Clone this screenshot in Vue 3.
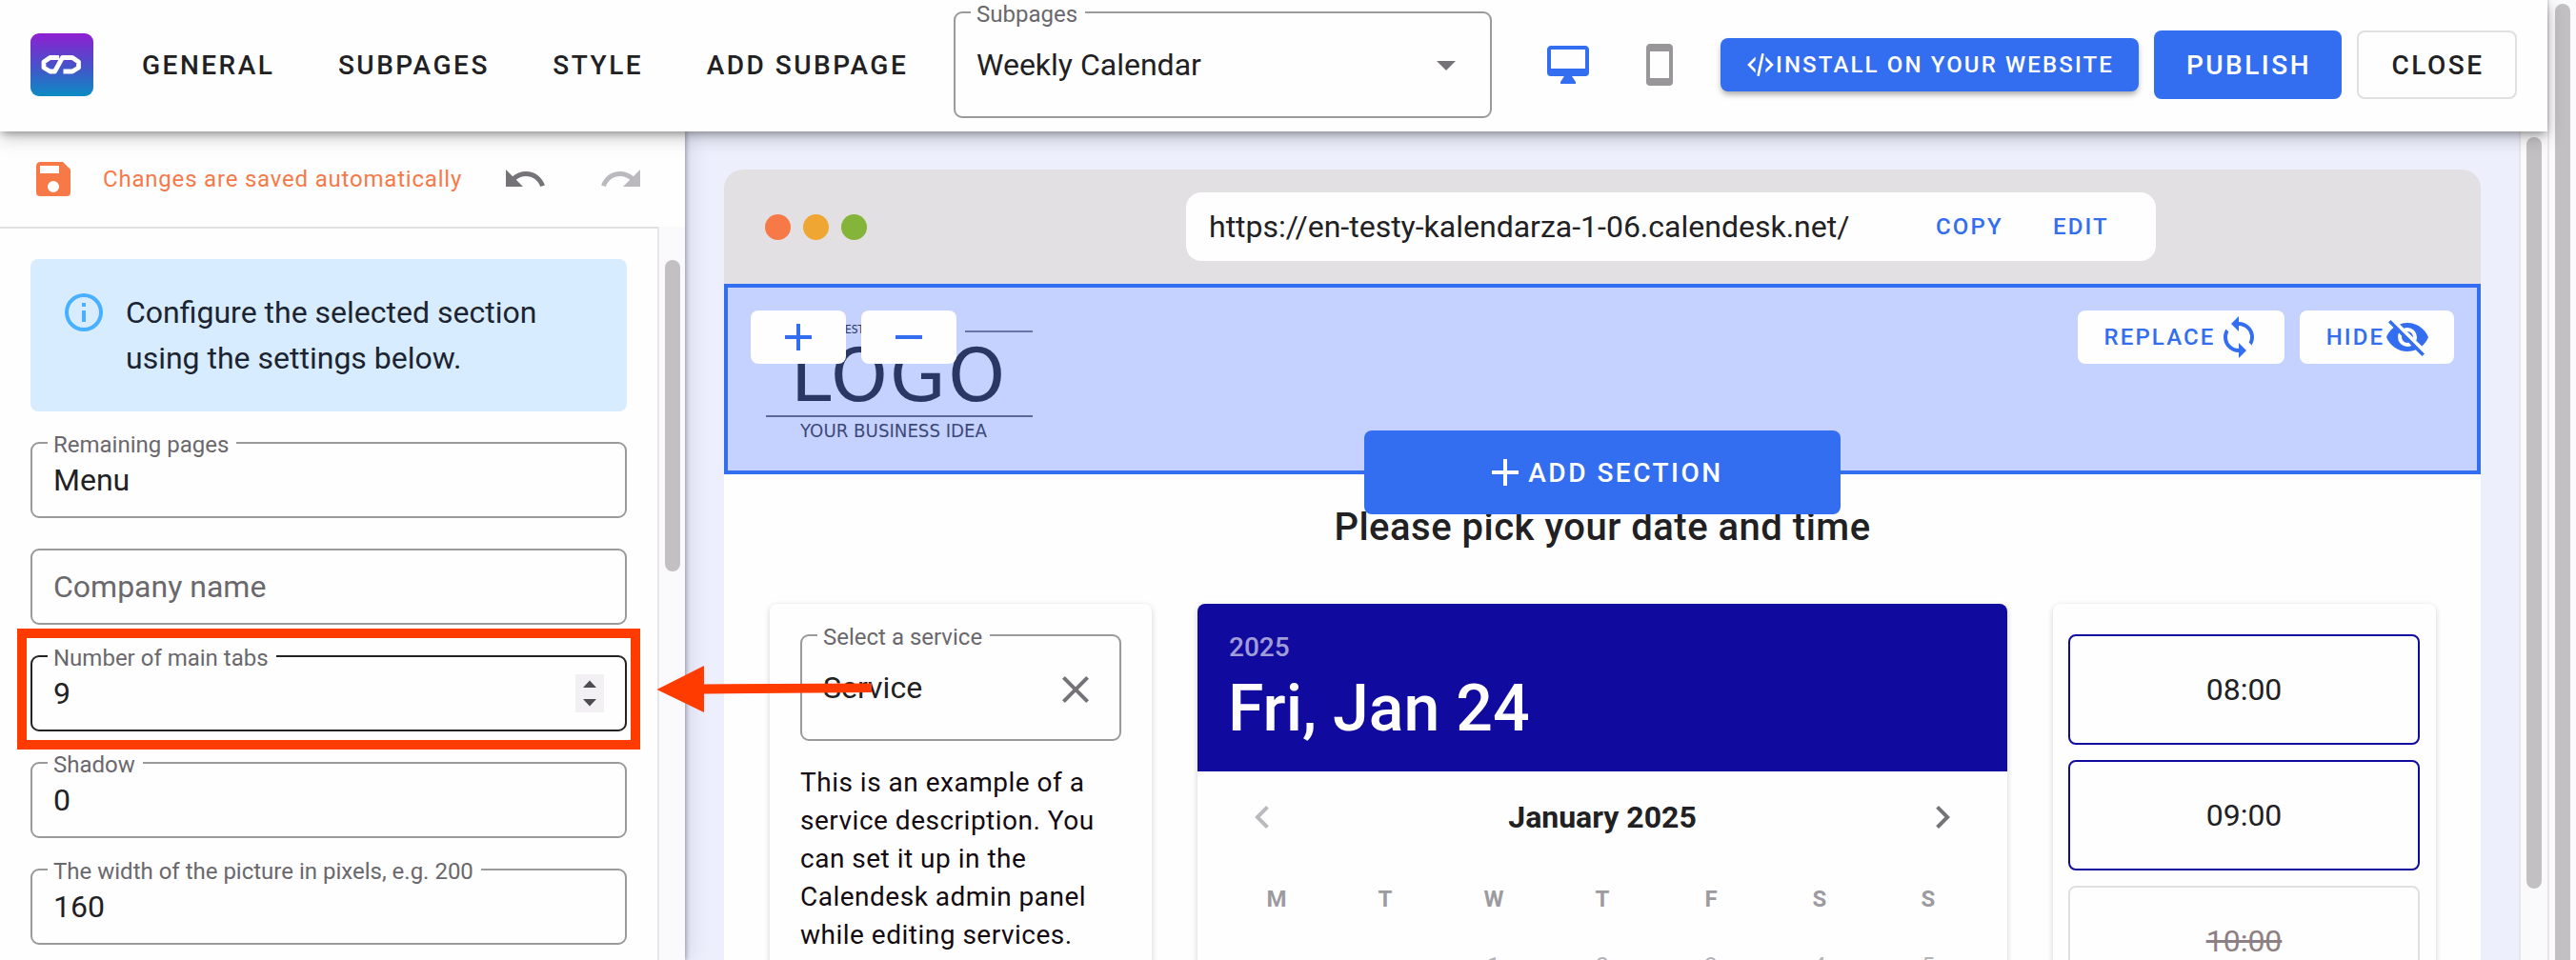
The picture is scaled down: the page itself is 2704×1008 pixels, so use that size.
<template>
  <div class="app">
    <div class="page">
      <header class="topbar">
        <svg class="brand" viewBox="0 0 66 66">
          <defs>
            <linearGradient id="brand-fill" x1="0" y1="0" x2="0" y2="1">
              <stop offset="0" stop-color="#8f1fd2" />
              <stop offset="0.5" stop-color="#4a4fc9" />
              <stop offset="1" stop-color="#0b8cc4" />
            </linearGradient>
          </defs>
          <rect width="66" height="66" rx="9" fill="url(#brand-fill)" />
          <path
            d="M30 25.500H20.500L14 30V36L20.500 40H25.500L33.500 25.500H44L50.500 30V36L44 40H34.500"
            fill="none" stroke="#fff" stroke-width="4.800" stroke-linejoin="round" />
        </svg>
        <nav class="nav">
          <a v-for="item in navItems" :key="item" class="nav-item">{{ item }}</a>
        </nav>
        <div class="field subpage-select">
          <span class="field-label">Subpages</span>
          <span class="field-value">Weekly Calendar</span>
          <svg class="icon" viewBox="0 0 24 24"><path :d="icons.menuDown" /></svg>
        </div>
        <svg class="icon device active" viewBox="0 0 24 24"><path :d="icons.desktop" /></svg>
        <svg class="icon device phone" viewBox="0 0 24 24"><path :d="icons.phone" /></svg>
        <button class="btn btn-install">
          <svg class="icon" viewBox="0 0 24 24"><path :d="icons.code" /></svg>
          <span>INSTALL ON YOUR WEBSITE</span>
        </button>
        <button class="btn btn-publish">PUBLISH</button>
        <button class="btn btn-close">CLOSE</button>
      </header>

      <div class="body">
        <aside class="sidebar">
          <div class="save-row">
            <svg class="icon save" viewBox="0 0 24 24"><path :d="icons.save" /></svg>
            <span class="save-text">Changes are saved automatically</span>
            <svg class="icon undo" viewBox="0 0 24 24"><path :d="icons.undo" /></svg>
            <svg class="icon redo" viewBox="0 0 24 24"><path :d="icons.redo" /></svg>
          </div>
          <div class="settings">
            <div class="settings-list">
              <div class="alert">
                <svg class="icon" viewBox="0 0 24 24"><path :d="icons.info" /></svg>
                <p>Configure the selected section<br>using the settings below.</p>
              </div>
              <div v-for="f in fields" :key="f.label" class="field" :class="{ focused: f.focused }">
                <span v-if="f.value" class="field-label">{{ f.label }}</span>
                <span v-if="f.value" class="field-value">{{ f.value }}</span>
                <span v-else class="field-placeholder">{{ f.label }}</span>
                <svg v-if="f.focused" class="spinner" viewBox="0 0 30 40">
                  <rect width="30" height="40" fill="#f2f0f3" />
                  <path d="M15 6.500L22 14H8ZM15 33.500L22 26H8Z" fill="#4d4b4f" />
                </svg>
                <div v-if="f.focused" class="highlight"></div>
              </div>
            </div>
            <div class="scroll-track side-track"><div class="scroll-thumb"></div></div>
          </div>
        </aside>

        <main class="preview">
          <div class="browser-bar">
            <div class="dots"><i class="dot red"></i><i class="dot amber"></i><i class="dot green"></i></div>
            <div class="address">
              <span class="url">https://en-testy-kalendarza-1-06.calendesk.net/</span>
              <a class="link">COPY</a>
              <a class="link">EDIT</a>
            </div>
          </div>

          <section class="hero">
            <svg class="hero-logo" viewBox="0 0 290 130">
              <text x="87" y="24" font-size="13" textLength="20" lengthAdjust="spacingAndGlyphs">EST</text>
              <path d="M213 22H284" stroke="#6875a9" stroke-width="2" />
              <text x="30" y="94.500" font-size="76" textLength="225">LOGO</text>
              <path d="M4 111H284" stroke="#39457a" stroke-width="1.600" />
              <text x="40" y="132.500" class="tagline" font-size="19" textLength="196" lengthAdjust="spacingAndGlyphs">YOUR BUSINESS IDEA</text>
            </svg>
            <div class="hero-tools">
              <button class="tool square"><svg class="icon" viewBox="0 0 24 24"><path :d="icons.plus" /></svg></button>
              <button class="tool square"><svg class="icon" viewBox="0 0 24 24"><path :d="icons.minus" /></svg></button>
              <span class="spacer"></span>
              <button class="tool replace">
                <span>REPLACE</span>
                <svg class="icon" viewBox="0 0 24 24"><path :d="icons.sync" /></svg>
              </button>
              <button class="tool hide">
                <span>HIDE</span>
                <svg class="icon" viewBox="0 0 24 24"><path :d="icons.eyeOff" /></svg>
              </button>
            </div>
            <button class="add-section">
              <svg class="icon" viewBox="0 0 24 24"><path :d="icons.plus" /></svg>
              <span>ADD SECTION</span>
            </button>
          </section>

          <section class="booking">
            <h2>Please pick your date and time</h2>
            <div class="columns">
              <div class="card service-card">
                <div class="field service-select">
                  <span class="field-label">Select a service</span>
                  <span class="field-value">Service</span>
                  <svg class="icon" viewBox="0 0 24 24"><path :d="icons.close" /></svg>
                </div>
                <p class="description">
                  This is an example of a<br>service description. You<br>can set it up in the<br>Calendesk admin panel<br>while editing services.
                </p>
              </div>

              <div class="card calendar">
                <div class="calendar-head">
                  <div class="year">2025</div>
                  <div class="date">Fri, Jan 24</div>
                </div>
                <div class="month-row">
                  <svg class="icon muted" viewBox="0 0 24 24"><path :d="icons.chevronLeft" /></svg>
                  <span class="month">January 2025</span>
                  <svg class="icon" viewBox="0 0 24 24"><path :d="icons.chevronRight" /></svg>
                </div>
                <div class="week weekdays">
                  <span v-for="(d, i) in weekdays" :key="i">{{ d }}</span>
                </div>
                <div class="week days">
                  <span v-for="(d, i) in firstWeek" :key="i">{{ d }}</span>
                </div>
              </div>

              <div class="card slots">
                <div v-for="s in slots" :key="s.time" class="slot" :class="{ taken: s.taken }">{{ s.time }}</div>
              </div>
            </div>
          </section>
        </main>

        <div class="scroll-track main-track"><div class="scroll-thumb"></div></div>
      </div>
    </div>
    <div class="scroll-track page-track"><div class="scroll-thumb"></div></div>

    <svg class="pointer" viewBox="0 0 230 60">
      <path d="M0.500 29L50 4V23.500L226 22.500V32L50 33.500V53Z" fill="#ff3b00" />
    </svg>
  </div>
</template>

<script setup>
const navItems = ['GENERAL', 'SUBPAGES', 'STYLE', 'ADD SUBPAGE']

const fields = [
  { label: 'Remaining pages', value: 'Menu' },
  { label: 'Company name', value: '' },
  { label: 'Number of main tabs', value: '9', focused: true },
  { label: 'Shadow', value: '0' },
  { label: 'The width of the picture in pixels, e.g. 200', value: '160' }
]

const weekdays = ['M', 'T', 'W', 'T', 'F', 'S', 'S']
const firstWeek = ['', '', 1, 2, 3, 4, 5]

const slots = [
  { time: '08:00' },
  { time: '09:00' },
  { time: '10:00', taken: true }
]

const icons = {
  menuDown: 'M7,10L12,15L17,10H7Z',
  desktop: 'M21,14H3V4H21M21,2H3C1.89,2 1,2.89 1,4V16A2,2 0 0,0 3,18H10L8,21V22H16V21L14,18H21A2,2 0 0,0 23,16V4C23,2.89 22.1,2 21,2Z',
  phone: 'M17,19H7V5H17M17,1H7C5.89,1 5,1.89 5,3V21A2,2 0 0,0 7,23H17A2,2 0 0,0 19,21V3C19,1.89 18.1,1 17,1Z',
  code: 'M12.89,3L14.85,3.4L11.11,21L9.15,20.6L12.89,3M19.59,12L16,8.41V5.58L22.42,12L16,18.41V15.58L19.59,12M1.58,12L8,5.58V8.41L4.41,12L8,15.58V18.41L1.58,12Z',
  save: 'M15,9H5V5H15M12,19A3,3 0 0,1 9,16A3,3 0 0,1 12,13A3,3 0 0,1 15,16A3,3 0 0,1 12,19M17,3H5C3.89,3 3,3.9 3,5V19A2,2 0 0,0 5,21H19A2,2 0 0,0 21,19V7L17,3Z',
  undo: 'M12.5,8C9.85,8 7.45,9 5.6,10.6L2,7V16H11L7.38,12.38C8.77,11.22 10.54,10.5 12.5,10.5C16.04,10.5 19.05,12.81 20.1,16L22.47,15.22C21.08,11.03 17.15,8 12.5,8Z',
  redo: 'M18.4,10.6C16.55,9 14.15,8 11.5,8C6.85,8 2.92,11.03 1.54,15.22L3.9,16C4.95,12.81 7.95,10.5 11.5,10.5C13.45,10.5 15.23,11.22 16.62,12.38L13,16H22V7L18.4,10.6Z',
  info: 'M11,9H13V7H11M12,20C7.59,20 4,16.41 4,12C4,7.59 7.59,4 12,4C16.41,4 20,7.59 20,12C20,16.41 16.41,20 12,20M12,2A10,10 0 0,0 2,12A10,10 0 0,0 12,22A10,10 0 0,0 22,12A10,10 0 0,0 12,2M11,17H13V11H11V17Z',
  plus: 'M19,13H13V19H11V13H5V11H11V5H13V11H19V13Z',
  minus: 'M19,13H5V11H19V13Z',
  sync: 'M12,18A6,6 0 0,1 6,12C6,11 6.25,10.03 6.7,9.2L5.24,7.74C4.46,8.97 4,10.43 4,12A8,8 0 0,0 12,20V23L16,19L12,15M12,4V1L8,5L12,9V6A6,6 0 0,1 18,12C18,13 17.75,13.97 17.3,14.8L18.76,16.26C19.54,15.03 20,13.57 20,12A8,8 0 0,0 12,4Z',
  eyeOff: 'M11.83,9L15,12.16C15,12.11 15,12.05 15,12A3,3 0 0,0 12,9C11.94,9 11.89,9 11.83,9M7.53,9.8L9.08,11.35C9.03,11.56 9,11.77 9,12A3,3 0 0,0 12,15C12.22,15 12.44,14.97 12.65,14.92L14.2,16.47C13.53,16.8 12.79,17 12,17A5,5 0 0,1 7,12C7,11.21 7.2,10.47 7.53,9.8M2,4.27L4.28,6.55L4.73,7C3.08,8.3 1.78,10 1,12C2.73,16.39 7,19.5 12,19.5C13.55,19.5 15.03,19.2 16.38,18.66L16.81,19.08L19.73,22L21,20.73L3.27,3M12,7A5,5 0 0,1 17,12C17,12.64 16.87,13.26 16.64,13.82L19.57,16.75C21.07,15.5 22.27,13.86 23,12C21.27,7.61 17,4.5 12,4.5C10.6,4.5 9.26,4.75 8,5.2L10.17,7.35C10.74,7.13 11.35,7 12,7Z',
  close: 'M19,6.41L17.59,5L12,10.59L6.41,5L5,6.41L10.59,12L5,17.59L6.41,19L12,13.41L17.59,19L19,17.59L13.41,12L19,6.41Z',
  chevronLeft: 'M15.41,16.58L10.83,12L15.41,7.41L14,6L8,12L14,18L15.41,16.58Z',
  chevronRight: 'M8.59,16.58L13.17,12L8.59,7.41L10,6L16,12L10,18L8.59,16.58Z'
}
</script>

<style>
body {
  margin: 0;
  overflow: hidden;
}
</style>

<style scoped>
.app {
  position: relative;
  display: flex;
  width: 2704px;
  height: 1008px;
  overflow: hidden;
  background: #fefefe;
  color: #212023;
  font-family: Roboto, "Liberation Sans", sans-serif;
  font-size: 32px;
}

.app * {
  box-sizing: border-box;
}

.page {
  width: 2674px;
  display: flex;
  flex-direction: column;
}

button {
  border: 0;
  padding: 0;
  font-family: inherit;
  display: flex;
  align-items: center;
  justify-content: center;
}

.icon {
  width: 48px;
  height: 48px;
  flex: none;
  fill: currentColor;
}

/* top bar */
.topbar {
  position: relative;
  z-index: 3;
  height: 138px;
  flex: none;
  display: flex;
  align-items: center;
  padding: 0 32px;
  background: #fefefe;
  box-shadow: 0 4px 8px -2px rgba(0, 0, 0, 0.3), 0 6px 18px rgba(0, 0, 0, 0.22);
}

.brand {
  width: 66px;
  height: 66px;
  flex: none;
  margin-top: -2px;
}

.nav {
  display: flex;
  gap: 66.5px;
  width: 852px;
  margin-left: 50px;
  padding-left: 1px;
  margin-top: -1px;
  flex: none;
}

.nav-item {
  font-size: 28px;
  font-weight: 500;
  letter-spacing: 2.5px;
  white-space: nowrap;
}

.field {
  position: relative;
  display: flex;
  align-items: center;
  height: 80px;
  flex: none;
  padding: 0 22px;
  border: 2px solid #9b999c;
  border-radius: 9px;
}

.field-label {
  position: absolute;
  top: -12px;
  left: 16px;
  padding: 0 8px 0 6px;
  background: #fefefe;
  color: #6a686c;
  font-size: 24px;
  line-height: 26px;
  white-space: nowrap;
}

.field-placeholder {
  color: #6a686c;
}

.field.focused {
  border-color: #232225;
}

.subpage-select {
  width: 565px;
  height: 112px;
  margin-top: -2px;
  margin-left: 1px;
}

.subpage-select .icon {
  margin-left: auto;
  color: #757377;
}

.device {
  margin-left: 56px;
  margin-top: -2px;
  color: #989699;
}

.device.active {
  color: #336ef1;
}

.device.phone {
  margin-left: 48px;
}

.btn {
  height: 72px;
  margin-top: -2px;
  border-radius: 8px;
  font-size: 28px;
  font-weight: 500;
  letter-spacing: 2.5px;
  flex: none;
}

.btn-install {
  width: 439px;
  height: 56px;
  margin-left: 40px;
  background: #336ef1;
  color: #fff;
  font-size: 24px;
  letter-spacing: 2.14px;
  box-shadow: 0 4px 6px -1px rgba(0, 0, 0, 0.35);
}

.btn-install .icon {
  width: 32px;
  height: 32px;
}

.btn-publish {
  width: 197px;
  margin-left: 16px;
  padding-left: 2px;
  background: #336ef1;
  color: #fff;
}

.btn-close {
  width: 168px;
  margin-left: 16px;
  padding-left: 2px;
  border: 2px solid #e0dfe1;
  background: #fefefe;
  color: #212023;
}

/* left panel */
.body {
  flex: 1;
  min-height: 0;
  display: flex;
}

.sidebar {
  position: relative;
  z-index: 2;
  width: 719px;
  flex: none;
  display: flex;
  flex-direction: column;
  background: #fefefe;
  box-shadow: 2px 0 4px rgba(0, 0, 0, 0.25), 4px 0 22px rgba(30, 30, 90, 0.12);
}

.save-row {
  height: 102px;
  flex: none;
  display: flex;
  align-items: center;
  padding-left: 32px;
  width: 691px;
  border-bottom: 2px solid #e0dfe1;
}

.save {
  color: #f77948;
}

.save-text {
  width: 416px;
  padding-left: 28px;
  color: #f77948;
  font-size: 24px;
  letter-spacing: 0.8px;
  white-space: nowrap;
}

.undo {
  margin-left: 31px;
  color: #757377;
}

.redo {
  margin-left: 53px;
  color: #bbb9bd;
}

.settings {
  flex: 1;
  min-height: 0;
  display: flex;
}

.settings-list {
  width: 690px;
  flex: none;
  display: flex;
  flex-direction: column;
  gap: 32px;
  padding: 32px 32px 0;
}

.alert {
  height: 160px;
  flex: none;
  display: flex;
  padding: 32px;
  border-radius: 8px;
  background: #d8ecff;
}

.alert .icon {
  color: #48b0ff;
}

.alert p {
  margin: 0 0 0 20px;
  line-height: 48px;
  white-space: nowrap;
  color: #1b2430;
}

.spinner {
  width: 30px;
  height: 40px;
  margin-left: auto;
}

.highlight {
  position: absolute;
  inset: -30px -16px -21px -16px;
  border: 10px solid #ff3b00;
}

/* scrollbars */
.scroll-track {
  flex: none;
  width: 30px;
  padding-left: 6px;
  border-left: 2px solid #e8e6e9;
  background: #faf9fb;
}

.scroll-thumb {
  width: 16px;
  border-radius: 8px;
  background: #c2c0c3;
}

.side-track {
  width: 29px;
  margin-top: -2px;
  padding-top: 35px;
}

.side-track .scroll-thumb {
  height: 327px;
}

.main-track {
  padding-top: 6px;
}

.main-track .scroll-thumb {
  height: 789px;
}

.page-track {
  padding-top: 4px;
}

.page-track .scroll-thumb {
  height: 1020px;
}

/* preview */
.preview {
  width: 1925px;
  flex: none;
  padding: 40px 40px 0 41px;
  background: #edeffd;
  display: flex;
  flex-direction: column;
}

.browser-bar {
  height: 120px;
  flex: none;
  display: flex;
  align-items: center;
  padding-left: 43px;
  border-radius: 20px 20px 0 0;
  background: #e2e0e3;
}

.dots {
  display: flex;
  gap: 13px;
}

.dot {
  width: 27px;
  height: 27px;
  border-radius: 50%;
}

.red { background: #f77948; }
.amber { background: #efa632; }
.green { background: #84b43a; }

.address {
  width: 1018px;
  height: 72px;
  margin-left: 335px;
  display: flex;
  align-items: center;
  padding-left: 24px;
  border-radius: 16px;
  background: #fefefe;
}

.url {
  width: 763px;
  flex: none;
}

.link {
  width: 123px;
  flex: none;
  color: #336ef1;
  font-size: 24px;
  font-weight: 500;
  letter-spacing: 2.14px;
}

.hero {
  position: relative;
  z-index: 1;
  height: 200px;
  flex: none;
  border: 4px solid #336ef1;
  background: #c5d1fe;
}

.hero-logo {
  position: absolute;
  left: 36px;
  top: 24px;
  width: 290px;
  height: 130px;
  overflow: visible;
  fill: #2a3663;
  font-family: "DejaVu Sans", sans-serif;
}

.hero-logo .tagline {
  fill: #3c4878;
}

.hero-tools {
  position: relative;
  display: flex;
  gap: 16px;
  padding: 24px;
}

.spacer {
  flex: 1;
}

.tool {
  height: 56px;
  border-radius: 8px;
  background: #fefefe;
  color: #336ef1;
  font-size: 24px;
  font-weight: 500;
  letter-spacing: 2.14px;
}

.square {
  width: 100px;
}

.replace {
  width: 217px;
  padding-left: 3px;
}

.hide {
  width: 162px;
  padding-left: 3px;
}

.add-section {
  position: absolute;
  left: 668px;
  top: 150px;
  width: 500px;
  height: 88px;
  padding-left: 1px;
  border-radius: 8px;
  background: #336ef1;
  color: #fff;
  font-size: 28px;
  font-weight: 500;
  letter-spacing: 2.5px;
}

.booking {
  flex: 1;
  min-height: 0;
  background: #fefefe;
}

h2 {
  margin: 32px 0 0;
  font-size: 40px;
  line-height: 48px;
  font-weight: 500;
  letter-spacing: 0.5px;
  text-align: center;
}

.columns {
  display: flex;
  justify-content: space-between;
  margin-top: 56px;
  padding: 0 47px 0 48px;
}

.card {
  height: 460px;
  border-radius: 8px;
  background: #fefefe;
  box-shadow: 0 2px 6px rgba(0, 0, 0, 0.18);
}

.service-card {
  width: 401px;
  padding: 32px;
}

.service-select {
  width: 337px;
  height: 112px;
}

.service-select .icon {
  margin-left: auto;
  margin-top: 4px;
  color: #757377;
}

.description {
  margin: 24px 0 0;
  color: #120a10;
  font-size: 28px;
  line-height: 40px;
  letter-spacing: 0.5px;
  white-space: nowrap;
}

.calendar {
  width: 850px;
  overflow: hidden;
}

.calendar-head {
  height: 176px;
  padding: 32px;
  background: #110a9e;
  color: #fefefe;
  font-weight: 500;
}

.year {
  padding-left: 1px;
  color: #a09dd8;
  font-size: 28px;
  line-height: 28px;
}

.date {
  margin-top: 16px;
  font-size: 68px;
  line-height: 68px;
}

.month-row {
  height: 96px;
  display: flex;
  align-items: center;
  justify-content: space-between;
  padding: 0 44px;
  color: #757377;
}

.month {
  color: #212023;
  font-weight: 700;
}

.muted {
  color: #bbb9bd;
}

.week {
  display: grid;
  grid-template-columns: repeat(7, 114px);
  padding-left: 26px;
  text-align: center;
  font-size: 24px;
}

.weekdays {
  height: 76px;
  line-height: 76px;
  color: #9d9b9f;
  font-weight: 700;
}

.days {
  height: 64px;
  line-height: 64px;
  color: #b5b3b7;
}

.slots {
  width: 402px;
  display: flex;
  flex-direction: column;
  gap: 16px;
  padding: 32px 17px 0 16px;
}

.slot {
  height: 116px;
  flex: none;
  display: flex;
  align-items: center;
  justify-content: center;
  border: 2px solid #110a9e;
  border-radius: 8px;
}

.taken {
  border-color: #e0dfe1;
  color: #8d8085;
  text-decoration: line-through;
}

/* arrow over the panels */
.pointer {
  position: absolute;
  z-index: 5;
  left: 689px;
  top: 695px;
  width: 230px;
  height: 60px;
}
</style>
